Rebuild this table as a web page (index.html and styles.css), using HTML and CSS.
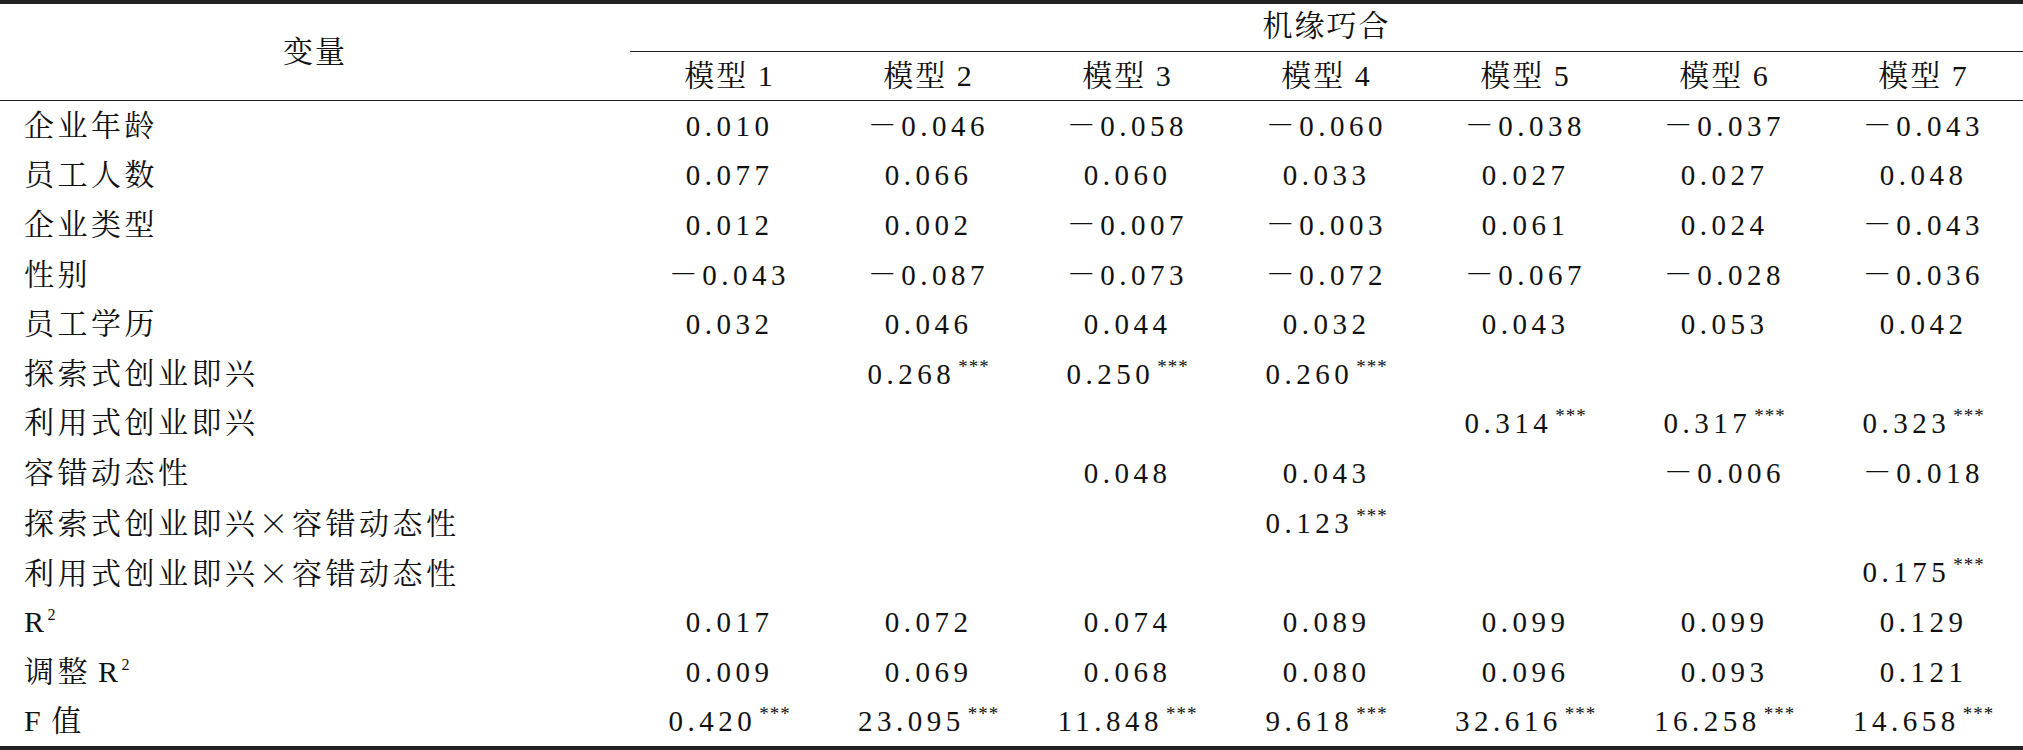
FILE: index.html
```html
<!DOCTYPE html>
<html lang="zh-CN">
<head>
<meta charset="utf-8">
<title>机缘巧合 回归结果</title>
<link rel="stylesheet" href="styles.css">
</head>
<body>
<div class="table">
  <div class="cell head var">变量</div>
  <div class="cell head group">机缘巧合</div>
  <div class="cell head model">模型 1</div>
  <div class="cell head model">模型 2</div>
  <div class="cell head model">模型 3</div>
  <div class="cell head model">模型 4</div>
  <div class="cell head model">模型 5</div>
  <div class="cell head model">模型 6</div>
  <div class="cell head model">模型 7</div>

  <div class="cell label">企业年龄</div>
  <div class="cell num">0.010</div>
  <div class="cell num">－0.046</div>
  <div class="cell num">－0.058</div>
  <div class="cell num">－0.060</div>
  <div class="cell num">－0.038</div>
  <div class="cell num">－0.037</div>
  <div class="cell num">－0.043</div>

  <div class="cell label">员工人数</div>
  <div class="cell num">0.077</div>
  <div class="cell num">0.066</div>
  <div class="cell num">0.060</div>
  <div class="cell num">0.033</div>
  <div class="cell num">0.027</div>
  <div class="cell num">0.027</div>
  <div class="cell num">0.048</div>

  <div class="cell label">企业类型</div>
  <div class="cell num">0.012</div>
  <div class="cell num">0.002</div>
  <div class="cell num">－0.007</div>
  <div class="cell num">－0.003</div>
  <div class="cell num">0.061</div>
  <div class="cell num">0.024</div>
  <div class="cell num">－0.043</div>

  <div class="cell label">性别</div>
  <div class="cell num">－0.043</div>
  <div class="cell num">－0.087</div>
  <div class="cell num">－0.073</div>
  <div class="cell num">－0.072</div>
  <div class="cell num">－0.067</div>
  <div class="cell num">－0.028</div>
  <div class="cell num">－0.036</div>

  <div class="cell label">员工学历</div>
  <div class="cell num">0.032</div>
  <div class="cell num">0.046</div>
  <div class="cell num">0.044</div>
  <div class="cell num">0.032</div>
  <div class="cell num">0.043</div>
  <div class="cell num">0.053</div>
  <div class="cell num">0.042</div>

  <div class="cell label">探索式创业即兴</div>
  <div class="cell num"></div>
  <div class="cell num"><span>0.268<sup class="sig">***</sup></span></div>
  <div class="cell num"><span>0.250<sup class="sig">***</sup></span></div>
  <div class="cell num"><span>0.260<sup class="sig">***</sup></span></div>
  <div class="cell num"></div>
  <div class="cell num"></div>
  <div class="cell num"></div>

  <div class="cell label">利用式创业即兴</div>
  <div class="cell num"></div>
  <div class="cell num"></div>
  <div class="cell num"></div>
  <div class="cell num"></div>
  <div class="cell num"><span>0.314<sup class="sig">***</sup></span></div>
  <div class="cell num"><span>0.317<sup class="sig">***</sup></span></div>
  <div class="cell num"><span>0.323<sup class="sig">***</sup></span></div>

  <div class="cell label">容错动态性</div>
  <div class="cell num"></div>
  <div class="cell num"></div>
  <div class="cell num">0.048</div>
  <div class="cell num">0.043</div>
  <div class="cell num"></div>
  <div class="cell num">－0.006</div>
  <div class="cell num">－0.018</div>

  <div class="cell label"><span>探索式创业即兴<span class="x">×</span>容错动态性</span></div>
  <div class="cell num"></div>
  <div class="cell num"></div>
  <div class="cell num"></div>
  <div class="cell num"><span>0.123<sup class="sig">***</sup></span></div>
  <div class="cell num"></div>
  <div class="cell num"></div>
  <div class="cell num"></div>

  <div class="cell label"><span>利用式创业即兴<span class="x">×</span>容错动态性</span></div>
  <div class="cell num"></div>
  <div class="cell num"></div>
  <div class="cell num"></div>
  <div class="cell num"></div>
  <div class="cell num"></div>
  <div class="cell num"></div>
  <div class="cell num"><span>0.175<sup class="sig">***</sup></span></div>

  <div class="cell label"><span>R<sup class="pow">2</sup></span></div>
  <div class="cell num">0.017</div>
  <div class="cell num">0.072</div>
  <div class="cell num">0.074</div>
  <div class="cell num">0.089</div>
  <div class="cell num">0.099</div>
  <div class="cell num">0.099</div>
  <div class="cell num">0.129</div>

  <div class="cell label"><span>调整 R<sup class="pow">2</sup></span></div>
  <div class="cell num">0.009</div>
  <div class="cell num">0.069</div>
  <div class="cell num">0.068</div>
  <div class="cell num">0.080</div>
  <div class="cell num">0.096</div>
  <div class="cell num">0.093</div>
  <div class="cell num">0.121</div>

  <div class="cell label">F 值</div>
  <div class="cell num"><span>0.420<sup class="sig">***</sup></span></div>
  <div class="cell num"><span>23.095<sup class="sig">***</sup></span></div>
  <div class="cell num"><span>11.848<sup class="sig">***</sup></span></div>
  <div class="cell num"><span>9.618<sup class="sig">***</sup></span></div>
  <div class="cell num"><span>32.616<sup class="sig">***</sup></span></div>
  <div class="cell num"><span>16.258<sup class="sig">***</sup></span></div>
  <div class="cell num"><span>14.658<sup class="sig">***</sup></span></div>
</div>
</body>
</html>
```

FILE: styles.css
```css
html, body {
  margin: 0;
  padding: 0;
  background: #ffffff;
}

body {
  color: #111111;
  font-family: "Liberation Serif", "Noto Serif CJK SC", "Noto Sans CJK SC", serif;
}

.table {
  display: grid;
  grid-template-columns: 630px repeat(7, 1fr);
  grid-template-rows: 48px 49px repeat(13, 1fr);
  width: 2023px;
  height: 742px;
  border-top: 4px solid #222222;
  border-bottom: 4px solid #222222;
}

.cell {
  display: flex;
  align-items: center;
  box-sizing: border-box;
  min-width: 0;
  white-space: nowrap;
  line-height: 30px;
}

.head {
  justify-content: center;
  font-size: 30px;
  letter-spacing: 2px;
}

.var {
  grid-row: 1 / span 2;
  grid-column: 1;
  border-bottom: 1px solid #222222;
}

.group {
  grid-row: 1;
  grid-column: 2 / span 7;
  border-bottom: 1px solid #222222;
  padding-bottom: 4px;
}

.model {
  grid-row: 2;
  border-bottom: 1px solid #222222;
}

.label {
  justify-content: flex-start;
  padding-left: 24px;
  font-size: 30px;
  letter-spacing: 3.5px;
  word-spacing: -4px;
}

.x {
  font-family: "Noto Sans CJK JP", "Noto Sans CJK SC", sans-serif;
  font-variant-east-asian: full-width;
  font-weight: 300;
}

.num {
  justify-content: center;
  font-size: 29px;
  letter-spacing: 4.5px;
}

.sig {
  font-size: 19px;
  line-height: 0;
  letter-spacing: 1px;
  vertical-align: 11px;
  margin-left: 3px;
}

.pow {
  font-size: 16px;
  line-height: 0;
  letter-spacing: 0;
  vertical-align: 12px;
  margin-left: 0;
}
```
